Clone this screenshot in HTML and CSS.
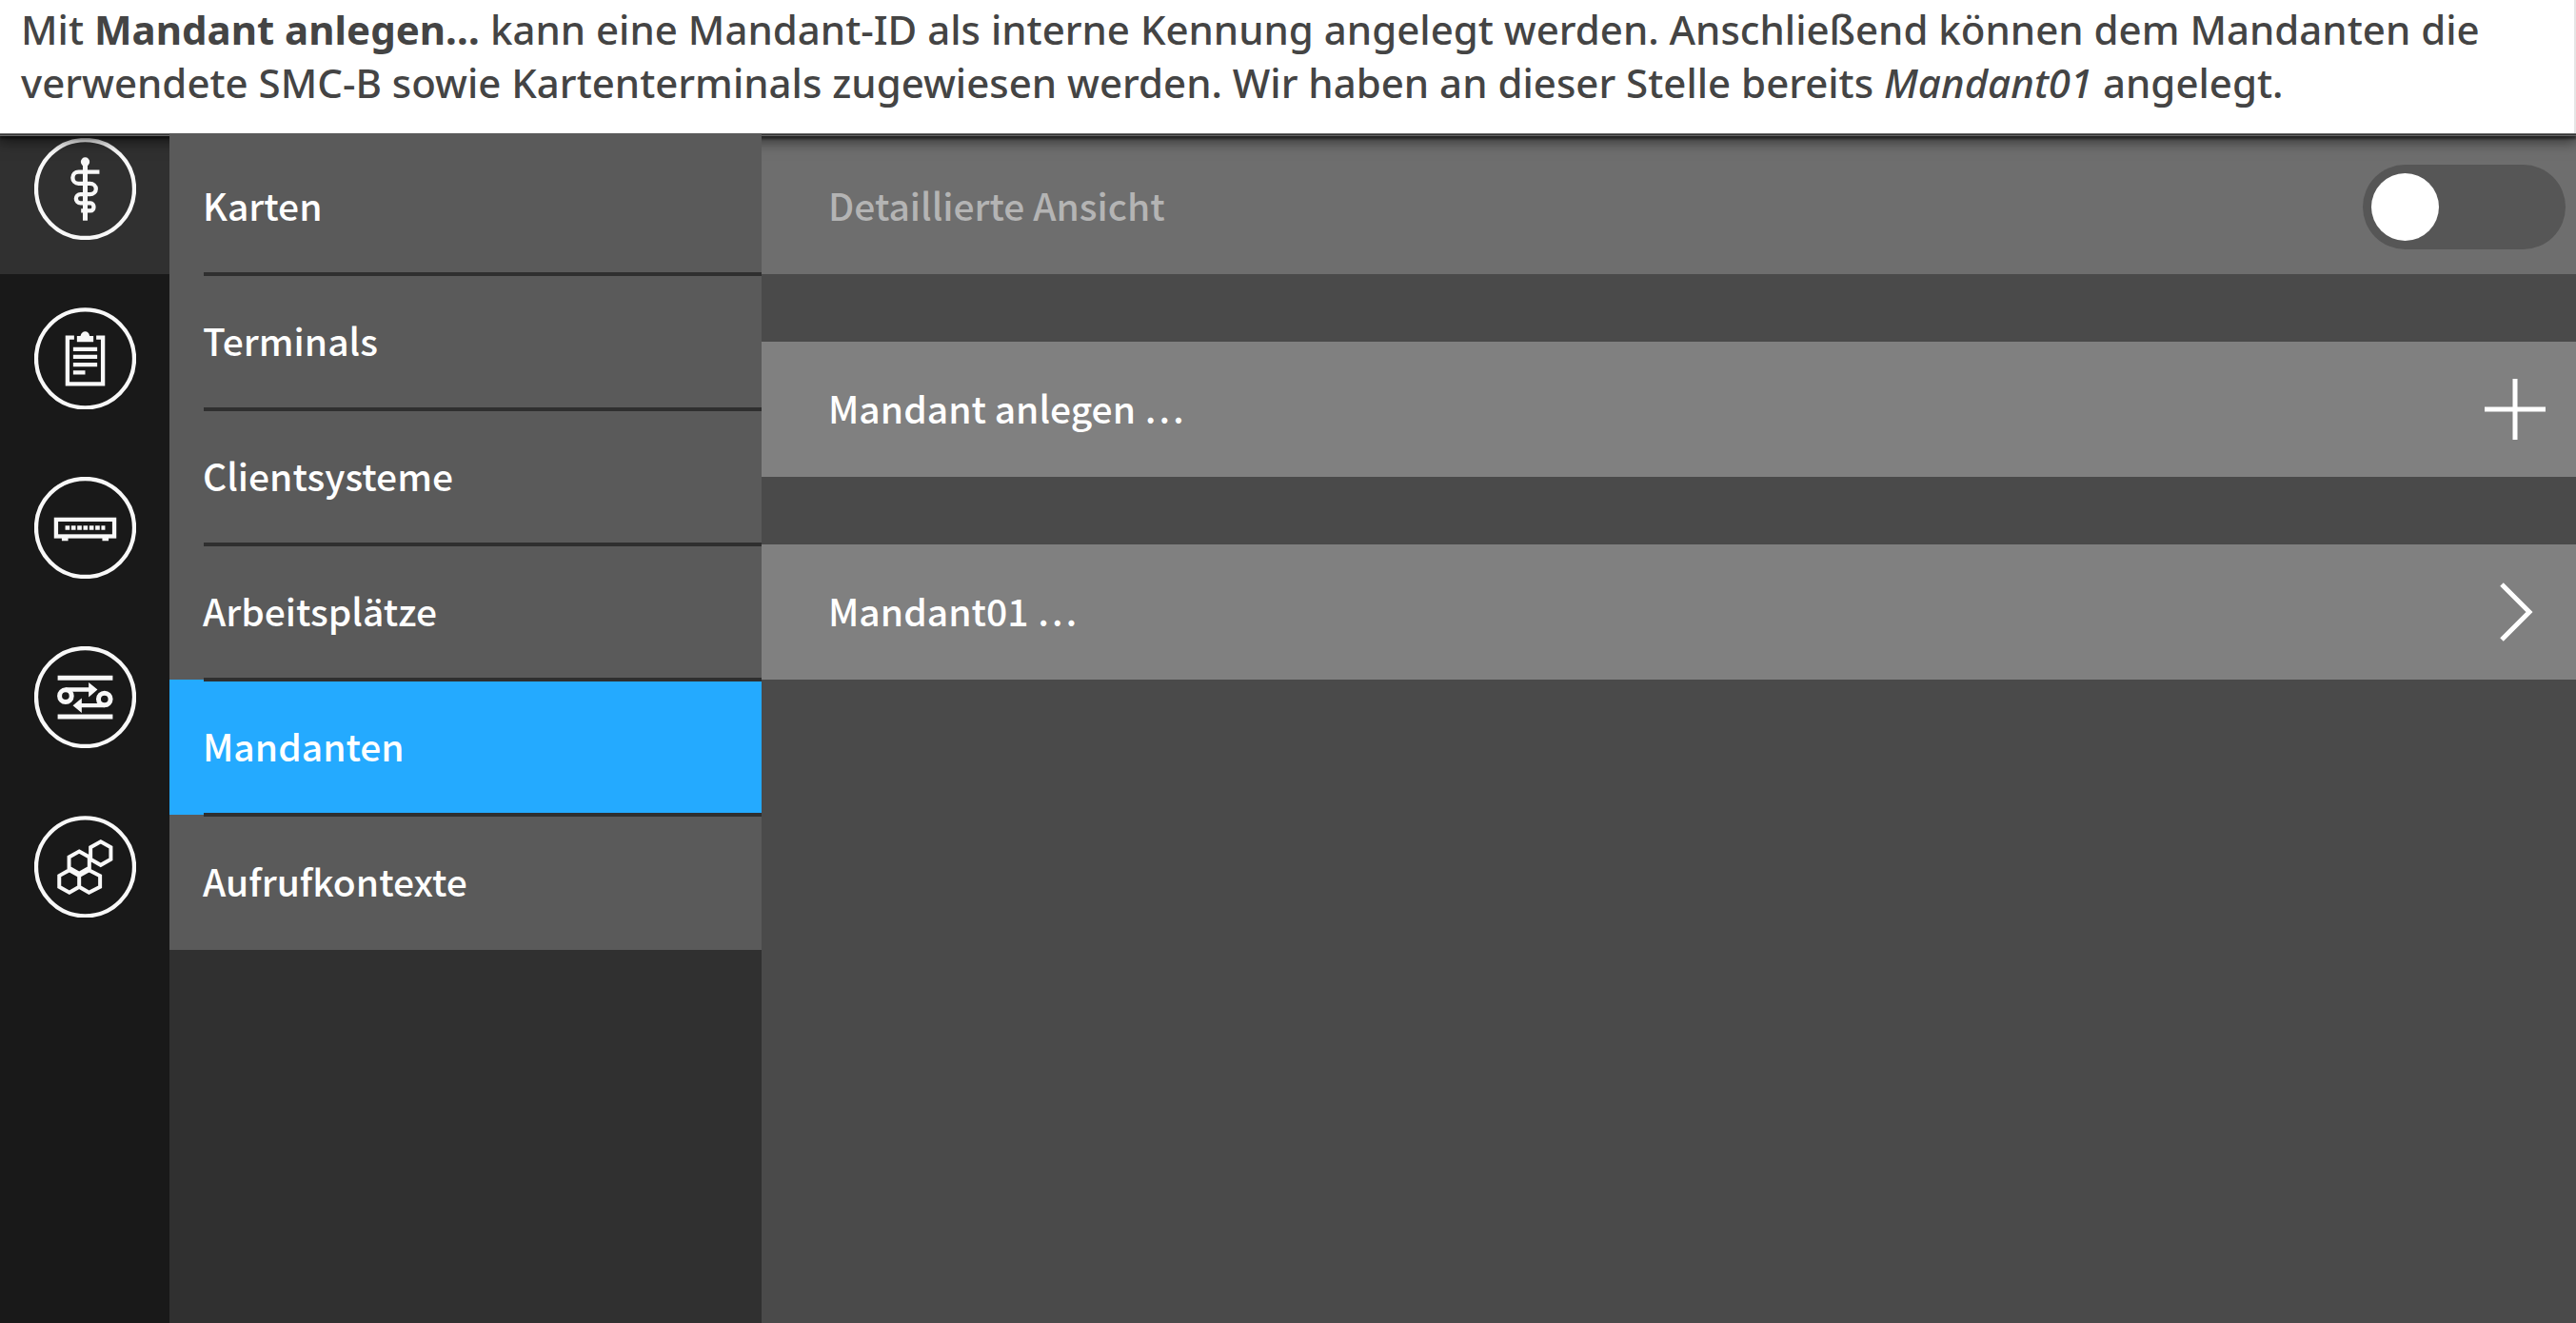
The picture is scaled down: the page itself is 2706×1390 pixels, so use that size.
FILE: index.html
```html
<!DOCTYPE html>
<html lang="de">
<head>
<meta charset="utf-8">
<meta name="viewport" content="width=device-width, initial-scale=1">
<title>Mandanten</title>
<link rel="stylesheet" href="styles.css">
</head>
<body>
<header class="intro">
  <p class="intro-text">Mit <strong>Mandant anlegen…</strong> kann eine Mandant-ID als interne Kennung angelegt werden. Anschließend können dem Mandanten die verwendete SMC-B sowie Kartenterminals zugewiesen werden. Wir haben an dieser Stelle bereits <em>Mandant01</em> angelegt.</p>
</header>
<div class="app">
  <nav class="rail" aria-label="Bereiche">
    <button class="rail-item rail-item-active" type="button" aria-label="Praxis">
      <svg class="rail-icon" viewBox="106 46 322 322" aria-hidden="true">
        <circle cx="267" cy="207" r="155"/>
        <circle class="solid" cx="267" cy="121" r="14"/>
        <path class="thick" d="M267 121V307"/>
        <path d="M312 153H246a18 18 0 0 0 0 37H282a19 17 0 0 1 0 34H252a14 14 0 0 0 0 28H284a10 12 0 0 1 0 24H254"/>
      </svg>
    </button>
    <button class="rail-item" type="button" aria-label="Protokoll">
      <svg class="rail-icon" viewBox="106 68 322 322" aria-hidden="true">
        <circle cx="267" cy="230" r="155"/>
        <path d="M232 163H211V310H323V163H302"/>
        <path class="solid" d="M241 177V158H252Q256 144 267 144T281 158H293V177Z"/>
        <path d="M229 200H305M229 224H305M229 249H305M229 274H267"/>
      </svg>
    </button>
    <button class="rail-item" type="button" aria-label="Konnektor">
      <svg class="rail-icon" viewBox="106 62 322 322" aria-hidden="true">
        <circle cx="267" cy="223" r="155"/>
        <rect x="175" y="197" width="184" height="53"/>
        <path d="M193 258H213M321 258H341"/>
        <path class="dots" d="M204 223H330"/>
      </svg>
    </button>
    <button class="rail-item" type="button" aria-label="Netzwerk">
      <svg class="rail-icon" viewBox="106 55 322 322" aria-hidden="true">
        <circle cx="267" cy="216" r="155"/>
        <path class="thick" d="M180 155H354M180 278H354"/>
        <circle class="thick" cx="205" cy="212" r="19"/>
        <circle class="thick" cx="328" cy="222" r="19"/>
        <path d="M205 192H284M328 242H250"/>
        <path class="solid" d="M278 169L306 192L278 216ZM256 219L228 242L256 266Z"/>
      </svg>
    </button>
    <button class="rail-item" type="button" aria-label="Module">
      <svg class="rail-icon" viewBox="106 78 322 322" aria-hidden="true">
        <circle cx="267" cy="240" r="155"/>
        <path class="thin" d="M316 160L348 178V216L316 234L284 216V178ZM248 191L280 209V243L248 261L216 243V209ZM217 250L248 268V303L217 321L185 303V268ZM279 250L314 268V303L279 321L248 303V268Z"/>
      </svg>
    </button>
  </nav>
  <nav class="menu" aria-label="Praxis">
    <a class="menu-item" href="#karten">Karten</a>
    <a class="menu-item" href="#terminals">Terminals</a>
    <a class="menu-item" href="#clientsysteme">Clientsysteme</a>
    <a class="menu-item" href="#arbeitsplaetze">Arbeitsplätze</a>
    <a class="menu-item menu-item-active" href="#mandanten" aria-current="page">Mandanten</a>
    <a class="menu-item" href="#aufrufkontexte">Aufrufkontexte</a>
  </nav>
  <main class="content">
    <div class="row row-setting">
      <label for="detail">Detaillierte Ansicht</label>
      <input class="switch" id="detail" type="checkbox" role="switch">
    </div>
    <button class="row row-action" type="button">
      <span>Mandant anlegen …</span>
      <svg class="row-icon" viewBox="0 0 64 64" aria-hidden="true"><path d="M0 32H64M32 0V64"/></svg>
    </button>
    <button class="row row-action" type="button">
      <span>Mandant01 …</span>
      <svg class="row-icon" viewBox="0 0 64 64" aria-hidden="true"><path d="M18 3L47 32L18 61"/></svg>
    </button>
  </main>
</div>
</body>
</html>
```
FILE: styles.css
```css
* {
  box-sizing: border-box;
}

body {
  display: flex;
  flex-direction: column;
  min-height: 100vh;
  margin: 0;
  background: #4a4a4a;
  font-family: "Noto Sans CJK SC", "Noto Sans", sans-serif;
  font-size: 39px;
  font-weight: 500;
  line-height: 56px;
}

.intro {
  position: relative;
  padding: 3px 22px 25px;
  border-right: 2px solid #e5e5e5;
  background: #fff;
  box-shadow: 0 1px #666, 0 2px #333, 0 3px #666, 0 6px 2px rgba(0, 0, 0, 0.4), 0 6px 14px 2px rgba(0, 0, 0, 0.6);
  color: #444;
  font-family: "Noto Sans", sans-serif;
  font-size: 42px;
}

.intro-text {
  margin: 0;
}

.app {
  display: grid;
  flex: 1;
  grid-template-columns: 178px 622px 1fr;
}

.rail {
  background: #191919;
}

.rail-item {
  display: flex;
  align-items: flex-end;
  justify-content: center;
  width: 100%;
  height: 178px;
  padding: 0 0 36px;
  border: 0;
  background: none;
}

.rail-item-active {
  height: 148px;
  background: #303030;
}

.rail-icon {
  width: 107px;
  height: 107px;
  fill: none;
  stroke: #f8f8f8;
  stroke-width: 13;
}

.rail-icon .solid {
  fill: #f8f8f8;
  stroke: none;
}

.rail-icon .thick {
  stroke-width: 15;
}

.rail-icon .thin {
  stroke-width: 12;
}

.rail-icon .dots {
  stroke-dasharray: 14 5;
}

.menu {
  background: #303030;
}

.menu-item {
  position: relative;
  display: flex;
  align-items: center;
  height: 142px;
  padding: 0 0 4px 35px;
  background: #5a5a5a;
  color: #fff;
  text-decoration: none;
}

.menu-item:first-child {
  height: 148px;
  padding-top: 6px;
}

.menu-item + .menu-item::before {
  position: absolute;
  top: -2px;
  right: 0;
  left: 36px;
  height: 4px;
  background: #2f2f2f;
  content: "";
}

.menu-item-active {
  background: #24aaff;
}

.content {
  display: flex;
  flex-direction: column;
  gap: 71px;
  background: #4a4a4a;
}

.row {
  display: flex;
  align-items: center;
  justify-content: space-between;
  height: 142px;
  padding: 0 32px 0 70px;
  border: 0;
  color: #fff;
  font: inherit;
  text-align: left;
}

.row label,
.row span {
  padding-bottom: 4px;
}

.row-setting {
  height: 148px;
  padding-top: 6px;
  padding-right: 11px;
  background: #6e6e6e;
  color: #b4b4b4;
}

.row-action {
  background: #808080;
}

.row-icon {
  width: 64px;
  height: 64px;
  fill: none;
  stroke: #fff;
  stroke-width: 5;
}

.switch {
  width: 213px;
  height: 89px;
  margin: 0;
  padding: 9px;
  border-radius: 45px;
  background: #565656;
  appearance: none;
}

.switch::before {
  display: block;
  width: 71px;
  height: 71px;
  border-radius: 50%;
  background: #fff;
  content: "";
}

.switch:checked::before {
  margin-left: auto;
}
```
